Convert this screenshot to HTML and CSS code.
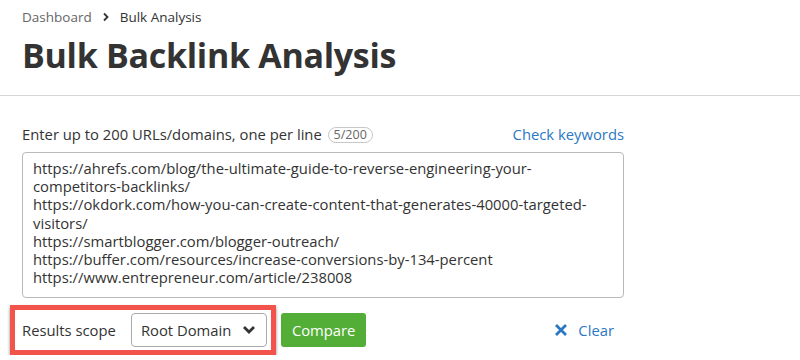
FILE: index.html
```html
<!DOCTYPE html>
<html lang="en">
<head>
  <meta charset="UTF-8">
  <title>Bulk Backlink Analysis</title>
  <link rel="stylesheet" href="styles.css">
</head>
<body>
  <div class="header">
    <div class="crumbs">
      <a class="crumb-link">Dashboard</a>
      <svg class="crumb-arrow" width="8" height="10" viewBox="0 0 8 10"><path d="M2 1.5 L5.5 5 L2 8.5" fill="none" stroke="#333" stroke-width="1.8"/></svg>
      <span class="crumb-current">Bulk Analysis</span>
    </div>
    <h1 class="title">Bulk Backlink Analysis</h1>
  </div>
  <div class="divider"></div>
  <div class="form">
    <div class="form-top">
      <div class="label">Enter up to 200 URLs/domains, one per line <span class="count">5/200</span></div>
      <a class="link">Check keywords</a>
    </div>
    <div class="urls">https://ahrefs.com/blog/the-ultimate-guide-to-reverse-engineering-your-competitors-backlinks/
https://okdork.com/how-you-can-create-content-that-generates-40000-targeted-visitors/
https://smartblogger.com/blogger-outreach/
https://buffer.com/resources/increase-conversions-by-134-percent
https://www.entrepreneur.com/article/238008</div>
    <div class="actions">
      <div class="scope">
        <span class="scope-label">Results scope</span>
        <div class="select">
          <span>Root Domain</span>
          <svg width="14" height="10" viewBox="0 0 14 10"><path d="M2 2 L7 7 L12 2" fill="none" stroke="#333" stroke-width="2.8"/></svg>
        </div>
      </div>
      <button class="compare">Compare</button>
      <a class="clear">
        <svg width="14" height="14" viewBox="0 0 14 14"><path d="M2 2 L12 12 M12 2 L2 12" stroke="#2b78c2" stroke-width="2.8"/></svg>
        Clear
      </a>
    </div>
  </div>
</body>
</html>
```

FILE: styles.css
```css
body{
  margin: 0;
  padding: 0;
  font-family: 'Open Sans', sans-serif;
  color: #333;
  background: #fff;
}
.header{
  padding: 7px 22px 0;
  height: 88px;
}
.crumbs{
  display: flex;
  align-items: center;
  gap: 6px;
  font-size: 13.5px;
  line-height: 20px;
}
.crumb-link{
  color: #666;
}
.crumb-arrow{
  margin: 0 4px;
}
.crumb-current{
  color: #333;
}
.title{
  margin: 6px 0 0;
  font-size: 34px;
  line-height: 44px;
  font-weight: 700;
  letter-spacing: -0.3px;
}
.divider{
  height: 1px;
  background: #d6d6d6;
}
.form{
  width: 602px;
  padding: 26px 22px 0;
}
.form-top{
  display: flex;
  justify-content: space-between;
  align-items: center;
  font-size: 14.8px;
  line-height: 24px;
}
.count{
  display: inline-block;
  margin-left: 2px;
  border: 1px solid #c8c8c8;
  border-radius: 8px;
  padding: 0 5px;
  font-size: 12.5px;
  line-height: 14px;
  color: #666;
  vertical-align: 1px;
}
.link{
  color: #2b78c2;
}
.urls{
  margin-top: 6px;
  height: 131px;
  padding: 6px 10px 7px;
  border: 1px solid #b9b9b9;
  border-radius: 4px;
  font-size: 14.8px;
  line-height: 18.2px;
  white-space: pre-wrap;
  color: #333;
}
.actions{
  display: flex;
  align-items: center;
  margin-top: 7px;
}
.scope{
  display: flex;
  align-items: center;
  margin-left: -12px;
  padding: 3px 4px 3px 7px;
  border: 5px solid #f2544c;
  box-shadow: 0 2px 3px rgba(0,0,0,0.45);
}
.scope-label{
  font-size: 14.8px;
  margin-right: 15px;
}
.select{
  display: flex;
  align-items: center;
  justify-content: space-between;
  box-sizing: border-box;
  width: 136px;
  height: 34px;
  padding: 0 10px 0 9px;
  border: 1px solid #aaa;
  border-radius: 4px;
  font-size: 14.8px;
}
.compare{
  margin-left: 5px;
  height: 34px;
  padding: 0 11px;
  border: none;
  border-radius: 3px;
  background: #53ae37;
  color: #fff;
  font-family: 'Open Sans', sans-serif;
  font-size: 14.8px;
}
.clear{
  display: flex;
  align-items: center;
  gap: 10px;
  margin-left: auto;
  margin-right: 10px;
  color: #2b78c2;
  font-size: 14.8px;
}
```
